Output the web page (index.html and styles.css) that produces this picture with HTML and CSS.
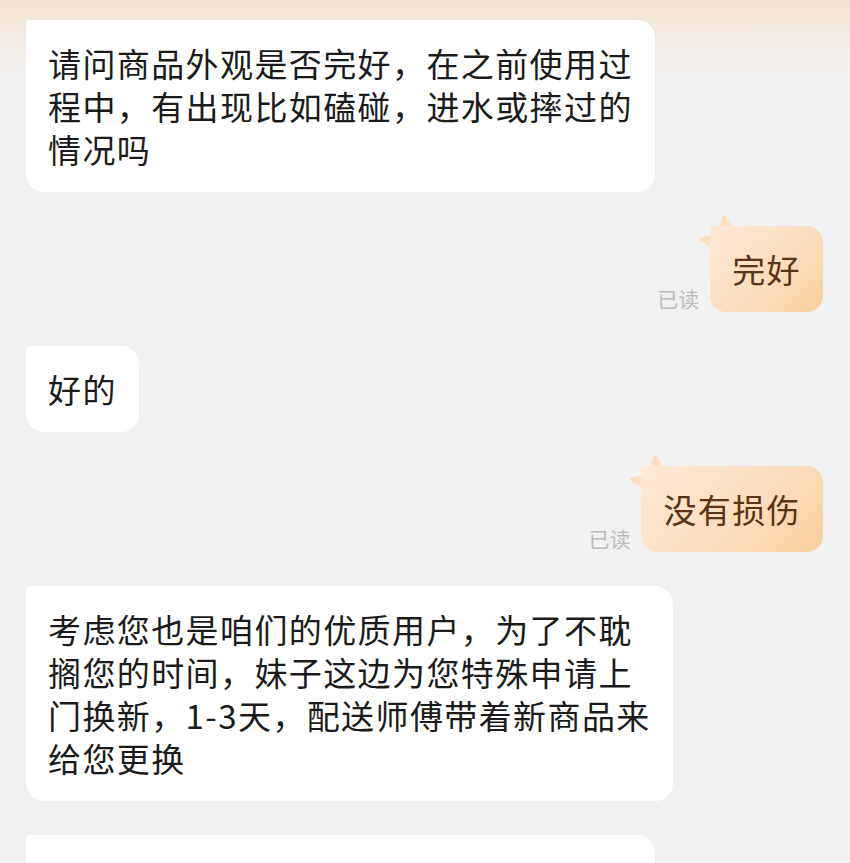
FILE: index.html
```html
<!DOCTYPE html>
<html>
  <head>
    <meta charset="utf-8">
    <title>聊天</title>
    <link rel="stylesheet" href="styles.css">
  </head>

  <body>
    <div id="chat">
      <div class="row left">
        <div class="bubble">请问商品外观是否完好，在之前使用过<br>程中，有出现比如磕碰，进水或摔过的<br>情况吗</div>
      </div>

      <div class="row right">
        <span class="read">已读</span>
        <div class="bubble mine">
          <svg class="star" viewBox="0 0 60 60">
            <defs>
              <linearGradient id="sg1" x1="0" y1="0" x2="0.7" y2="0.7">
                <stop offset="0" stop-color="#fbd0a0" />
                <stop offset="0.6" stop-color="#fde6cd" />
              </linearGradient>
            </defs>
            <path d="M26.1 2.3 L21 20.7 L2.4 25.1 L18.3 35.7 L16.9 54.7 L31.8 42.9 L49.5 50.1 L42.8 32.3 L55.2 17.7 L36.1 18.5 Z" fill="url(#sg1)" stroke="url(#sg1)" stroke-width="2.5" stroke-linejoin="round" />
          </svg>
          完好
        </div>
      </div>

      <div class="row left">
        <div class="bubble">好的</div>
      </div>

      <div class="row right">
        <span class="read">已读</span>
        <div class="bubble mine">
          <svg class="star" viewBox="0 0 60 60">
            <defs>
              <linearGradient id="sg2" x1="0" y1="0" x2="0.7" y2="0.7">
                <stop offset="0" stop-color="#fbd0a0" />
                <stop offset="0.6" stop-color="#fde6cd" />
              </linearGradient>
            </defs>
            <path d="M26.1 2.3 L21 20.7 L2.4 25.1 L18.3 35.7 L16.9 54.7 L31.8 42.9 L49.5 50.1 L42.8 32.3 L55.2 17.7 L36.1 18.5 Z" fill="url(#sg2)" stroke="url(#sg2)" stroke-width="2.5" stroke-linejoin="round" />
          </svg>
          没有损伤
        </div>
      </div>

      <div class="row left">
        <div class="bubble">考虑您也是咱们的优质用户，为了不耽<br>搁您的时间，妹子这边为您特殊申请上<br>门换新，1-3天，配送师傅带着新商品来<br>给您更换</div>
      </div>

      <div class="row left">
        <div class="bubble">您看这样可以吗？可以的话，妹子这边<br>就帮您提交申请了</div>
      </div>
    </div>
  </body>
</html>
```

FILE: styles.css
```css
html,
body {
  margin: 0;
  height: 100%;
}

body {
  background: linear-gradient(#f3e3d2 0, #f2ebe4 40px, #f1f1f1 80px) no-repeat, #f1f1f1;
  font-family: "Noto Sans CJK SC", "Noto Sans", sans-serif;
  overflow: hidden;
}

#chat {
  display: flex;
  flex-direction: column;
  gap: 34px;
  padding: 20px 27px 0 26px;
}

.row {
  display: flex;
  align-items: flex-end;
}

.row.right {
  justify-content: flex-end;
}

.bubble {
  box-sizing: border-box;
  padding: 22px 22px 21px;
  background: #fff;
  border-radius: 2px 18px 18px 18px;
  color: #1b1b1b;
  font-size: 33px;
  line-height: 43px;
  letter-spacing: 1.4px;
  white-space: nowrap;
}

.bubble.mine {
  position: relative;
  background: linear-gradient(135deg, #fde9d5 0%, #fcdcbb 60%, #fbcf9f 100%);
  border-radius: 2px 16px 16px 16px;
  color: #5a3414;
}

.star {
  position: absolute;
  left: -12px;
  top: -12px;
  width: 60px;
  height: 60px;
  z-index: -1;
}

.read {
  margin: 0 11px 1px 0;
  color: #bdbdbd;
  font-size: 21px;
  line-height: 26px;
}
```
